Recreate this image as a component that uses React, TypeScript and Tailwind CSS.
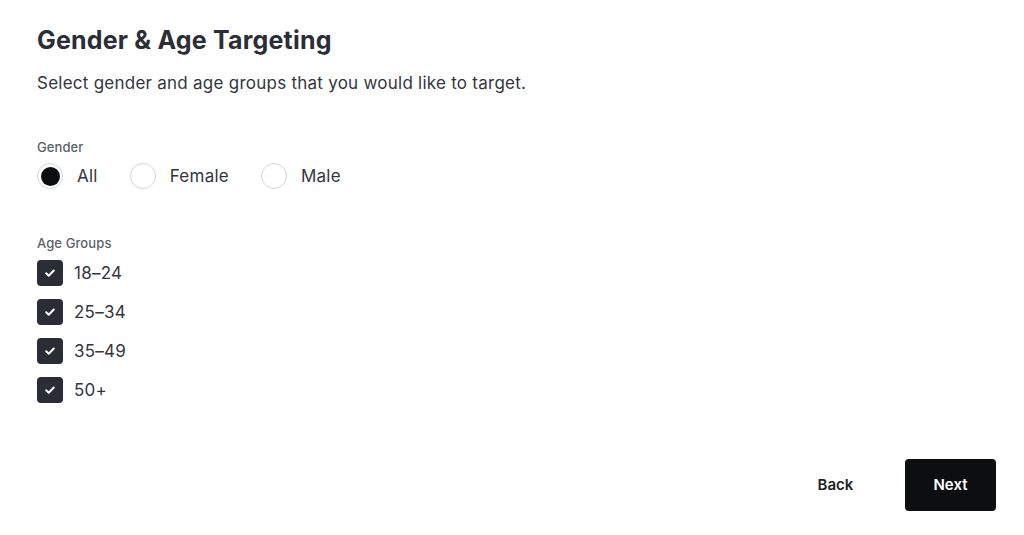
import React, { useState } from 'react';

const genders = ['All', 'Female', 'Male'];
const ageGroups = ['18–24', '25–34', '35–49', '50+'];

const CheckIcon = () => (
  <svg width="14" height="14" viewBox="0 0 14 14" fill="none">
    <path d="M3.2 7.3l2.5 2.4 5.1-5.2" stroke="white" strokeWidth="2" strokeLinecap="round" strokeLinejoin="round" />
  </svg>
);

const App: React.FC = () => {
  const [gender, setGender] = useState('All');
  const [ages, setAges] = useState<string[]>(ageGroups);

  const toggleAge = (age: string) =>
    setAges((prev) => (prev.includes(age) ? prev.filter((a) => a !== age) : [...prev, age]));

  return (
    <div className="w-[1024px] h-[535px] bg-white font-['Inter',sans-serif] text-[#2b2e36] relative">
      <div className="pl-[37px] pt-[24px]">
        <h1 className="text-[25px] leading-[32px] font-bold tracking-[0.2px]">Gender &amp; Age Targeting</h1>
        <p className="mt-[15px] text-[17px] leading-[24px] tracking-[0.25px] text-[#33363d]">
          Select gender and age groups that you would like to target.
        </p>

        <div className="mt-[43px]">
          <div className="text-[13px] leading-[18px] text-[#5b5f69] font-medium tracking-[0.1px]">Gender</div>
          <div className="mt-[7px] flex items-center">
            {genders.map((g) => (
              <label key={g} className="flex items-center mr-[32px] cursor-pointer" onClick={() => setGender(g)}>
                <span className="w-[26px] h-[26px] rounded-full border border-[#d4d6da] bg-white flex items-center justify-center">
                  {gender === g && <span className="w-[19px] h-[19px] rounded-full bg-[#0d0e10]" />}
                </span>
                <span className="ml-[14px] text-[17px] leading-[24px] tracking-[0.25px] text-[#33363d]">{g}</span>
              </label>
            ))}
          </div>
        </div>

        <div className="mt-[45px]">
          <div className="text-[13px] leading-[18px] text-[#5b5f69] font-medium tracking-[0.1px]">Age Groups</div>
          <div className="mt-[8px] flex flex-col gap-[13px]">
            {ageGroups.map((a) => (
              <label key={a} className="flex items-center cursor-pointer" onClick={() => toggleAge(a)}>
                <span
                  className={`w-[26px] h-[26px] rounded-[4px] flex items-center justify-center ${
                    ages.includes(a) ? 'bg-[#2b2d36]' : 'border border-[#d4d6da] bg-white'
                  }`}
                >
                  {ages.includes(a) && <CheckIcon />}
                </span>
                <span className="ml-[11px] text-[17px] leading-[24px] tracking-[0.25px] text-[#33363d]">{a}</span>
              </label>
            ))}
          </div>
        </div>
      </div>

      <div className="absolute right-[28px] bottom-[24px] flex items-center gap-[24px]">
        <button className="w-[91px] h-[52px] text-[15px] font-semibold text-[#1d1f24]">Back</button>
        <button className="w-[91px] h-[52px] rounded-[4px] bg-[#0d0e10] text-[15px] font-semibold text-white">
          Next
        </button>
      </div>
    </div>
  );
};

export default App;
